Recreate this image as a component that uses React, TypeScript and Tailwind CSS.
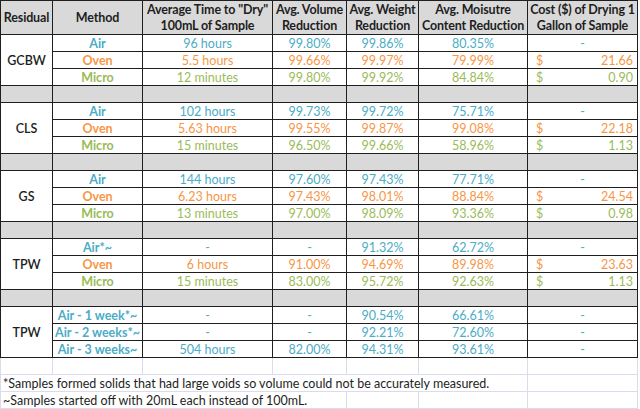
import React from "react";

const B = "#4bacc6";
const O = "#f79646";
const G = "#9bbb59";

type Row = { m: string; t: string; v: string; w: string; mc: string; cost: string | null; c: string };
type Group = { name: string; rows: Row[] };

const groups: Group[] = [
  {
    name: "GCBW",
    rows: [
      { m: "Air", t: "96 hours", v: "99.80%", w: "99.86%", mc: "80.35%", cost: null, c: B },
      { m: "Oven", t: "5.5 hours", v: "99.66%", w: "99.97%", mc: "79.99%", cost: "21.66", c: O },
      { m: "Micro", t: "12 minutes", v: "99.80%", w: "99.92%", mc: "84.84%", cost: "0.90", c: G },
    ],
  },
  {
    name: "CLS",
    rows: [
      { m: "Air", t: "102 hours", v: "99.73%", w: "99.72%", mc: "75.71%", cost: null, c: B },
      { m: "Oven", t: "5.63 hours", v: "99.55%", w: "99.87%", mc: "99.08%", cost: "22.18", c: O },
      { m: "Micro", t: "15 minutes", v: "96.50%", w: "99.66%", mc: "58.96%", cost: "1.13", c: G },
    ],
  },
  {
    name: "GS",
    rows: [
      { m: "Air", t: "144 hours", v: "97.60%", w: "97.43%", mc: "77.71%", cost: null, c: B },
      { m: "Oven", t: "6.23 hours", v: "97.43%", w: "98.01%", mc: "88.84%", cost: "24.54", c: O },
      { m: "Micro", t: "13 minutes", v: "97.00%", w: "98.09%", mc: "93.36%", cost: "0.98", c: G },
    ],
  },
  {
    name: "TPW",
    rows: [
      { m: "Air*~", t: "-", v: "-", w: "91.32%", mc: "62.72%", cost: null, c: B },
      { m: "Oven", t: "6 hours", v: "91.00%", w: "94.69%", mc: "89.98%", cost: "23.63", c: O },
      { m: "Micro", t: "15 minutes", v: "83.00%", w: "95.72%", mc: "92.63%", cost: "1.13", c: G },
    ],
  },
  {
    name: "TPW",
    rows: [
      { m: "Air - 1 week*~", t: "-", v: "-", w: "90.54%", mc: "66.61%", cost: null, c: B },
      { m: "Air - 2 weeks*~", t: "-", v: "-", w: "92.21%", mc: "72.60%", cost: null, c: B },
      { m: "Air - 3 weeks~", t: "504 hours", v: "82.00%", w: "94.31%", mc: "93.61%", cost: null, c: B },
    ],
  },
];

const widths = [52, 90, 130, 74, 72, 109, 110];

const cell =
  "border border-[#1f1f1f] p-0 text-center align-middle h-[17px] leading-[15px] whitespace-nowrap overflow-hidden";
const light = "border border-[#dadcec] p-0 h-[17px] leading-[15px] whitespace-nowrap";
const head = `${cell} h-[34px] leading-[16px] text-[12.5px] tracking-[-0.15px]`;

export default function App() {
  return (
    <div
      className="w-[640px] h-[409px] bg-white overflow-hidden text-[12.5px] text-[#1e1e1e]"
      style={{ fontFamily: "Lato, 'Open Sans', sans-serif" }}
    >
      <table className="border-collapse table-fixed w-[637px]">
        <colgroup>
          {widths.map((w, i) => (
            <col key={i} style={{ width: w }} />
          ))}
        </colgroup>
        <tbody>
          <tr className="bg-[#d9d9d9] font-bold">
            <td className={head}>Residual</td>
            <td className={head}>Method</td>
            <td className={head}>
              Average Time to "Dry"
              <br />
              100mL of Sample
            </td>
            <td className={head}>
              Avg. Volume
              <br />
              Reduction
            </td>
            <td className={head}>
              Avg. Weight
              <br />
              Reduction
            </td>
            <td className={head}>
              Avg. Moisutre
              <br />
              Content Reduction
            </td>
            <td className={head}>
              Cost ($) of Drying 1
              <br />
              Gallon of Sample
            </td>
          </tr>
          {groups.map((g, gi) => (
            <React.Fragment key={gi}>
              {gi > 0 && (
                <tr className="bg-[#d9d9d9]">
                  {widths.map((_, i) => (
                    <td key={i} className={cell}></td>
                  ))}
                </tr>
              )}
              {g.rows.map((r, ri) => (
                <tr key={ri}>
                  {ri === 0 && (
                    <td rowSpan={3} className={`${cell} font-semibold`}>
                      {g.name}
                    </td>
                  )}
                  <td className={`${cell} font-bold`} style={{ color: r.c }}>
                    {r.m}
                  </td>
                  <td className={cell} style={{ color: r.c }}>
                    {r.t}
                  </td>
                  <td className={cell} style={{ color: r.c }}>
                    {r.v}
                  </td>
                  <td className={cell} style={{ color: r.c }}>
                    {r.w}
                  </td>
                  <td className={cell} style={{ color: r.c }}>
                    {r.mc}
                  </td>
                  <td className={cell} style={{ color: r.c }}>
                    {r.cost === null ? (
                      <span>-</span>
                    ) : (
                      <div className="flex justify-between pl-[8px] pr-[4px]">
                        <span>$</span>
                        <span>{r.cost}</span>
                      </div>
                    )}
                  </td>
                </tr>
              ))}
            </React.Fragment>
          ))}
          <tr>
            {widths.map((_, i) => (
              <td key={i} className={light}></td>
            ))}
          </tr>
          <tr>
            <td colSpan={6} className={`${light} pl-[2px]`}>
              *Samples formed solids that had large voids so volume could not be accurately measured.
            </td>
            <td className={light}></td>
          </tr>
          <tr>
            <td colSpan={4} className={`${light} pl-[2px]`}>
              ~Samples started off with 20mL each instead of 100mL.
            </td>
            <td className={light}></td>
            <td className={light}></td>
            <td className={light}></td>
          </tr>
        </tbody>
      </table>
    </div>
  );
}
